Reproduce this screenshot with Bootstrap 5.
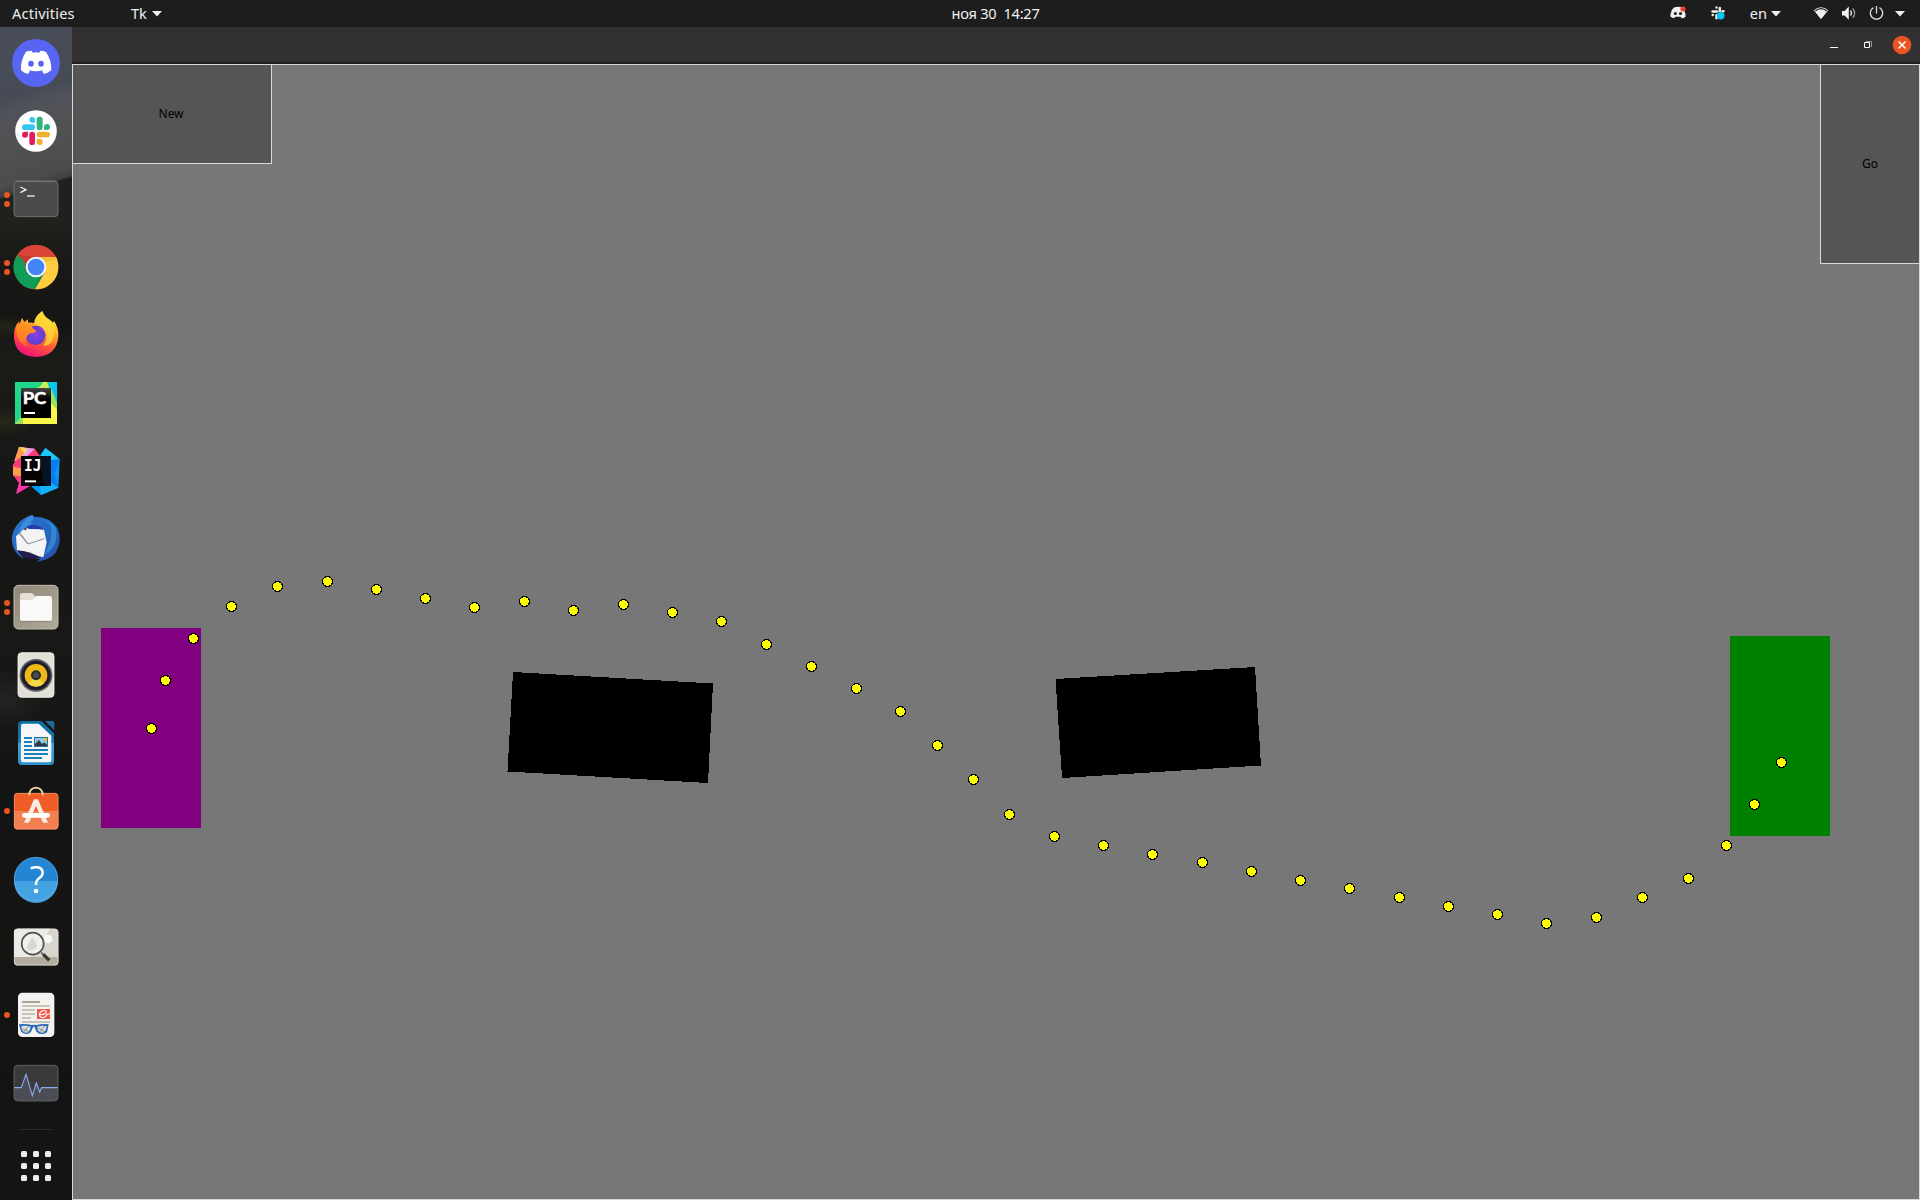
<!DOCTYPE html>
<html lang="en">
<head>
<meta charset="utf-8">
<title>Tk</title>
<link href="https://cdn.jsdelivr.net/npm/bootstrap@5.3.0/dist/css/bootstrap.min.css" rel="stylesheet">
<style>
html,body{height:100%;overflow:hidden}
body{font-family:"Noto Sans","Open Sans",sans-serif;background:#1d1d1d}
.desk{width:1920px;height:1200px}
.topbar{height:27px;background:#1d1d1d;color:#f0f0f0;font-size:14.6px;line-height:27px;display:grid;grid-template-columns:1fr auto 1fr}
.topbar svg{display:block}
.act{padding-left:12px;width:131px;letter-spacing:.2px}
.clock{white-space:pre;letter-spacing:-.25px;padding-left:71px}
.dock{width:72px;padding-top:2px;background:
 radial-gradient(ellipse 30px 14px at 6px 395px,#33361d88,transparent),
 radial-gradient(ellipse 26px 12px at 8px 300px,#33361d77,transparent),
 radial-gradient(ellipse 40px 30px at 6px 672px,#35353566,transparent),
 linear-gradient(163deg,#484d58 0,#464b55 70px,#50525a 84px,#515254 110px,#4b4c4d 154px,#3d3f3e 163px,transparent 165px),
 linear-gradient(22deg,transparent 985px,#1a1a19 990px),
 linear-gradient(#1f211c 0,#1f211c 195px,#1a1917 230px,#151514 300px,#1b1c18 330px,#161615 480px,#181816 620px,#131415 780px,#161514 900px,#131313 1050px,#151518 1173px);
 background-color:#161615}
.slot{height:68px;padding:10px 12px;position:relative}
.slot>svg{display:block;width:48px;height:48px;overflow:visible}
.run{position:absolute;left:4px;top:0;height:68px;width:6px;display:flex;flex-direction:column;justify-content:center;gap:3px}
.run i{width:6px;height:6px;border-radius:50%;background:#e95420}
.dock hr{width:32px;margin:12px 20px 0;border-color:#777;border-width:1px;height:0}
.apps{width:30px;margin:21px 0 0 21px;display:grid;grid-template-columns:repeat(3,6px);gap:6px}
.apps i{width:6px;height:6px;border-radius:1.5px;background:#eee}
.titlebar{height:37px;background:#333031;border-bottom:2px solid #201e1f;padding:1px 8px 0 0}
.titlebar svg{display:block}
.stage{position:relative;background:#777;border:1px solid #d9d9d9}
.scene{position:absolute;left:-73px;top:-65px;width:1920px;height:1200px}
.tkbtn{background:#555;color:#000;border:0 solid #d9d9d9;font-size:12px;letter-spacing:-.1px;z-index:1;border-radius:0}
.tknew{width:199px;height:99px;border-width:0 1px 1px 0;padding:0 2px 0 0}
.tkgo{width:99px;height:199px;border-width:0 0 1px 1px}
</style>
</head>
<body>
<div class="desk d-flex flex-column">
 <header class="topbar flex-shrink-0">
  <div class="d-flex">
   <div class="act">Activities</div><div>Tk</div>
   <svg width="12" height="27" style="margin-left:3px"><path d="M2 11h10l-5 5.500z" fill="#f0f0f0"/></svg>
  </div>
  <div class="clock">ноя 30  14:27</div>
  <div class="d-flex justify-content-end">
   <svg width="80" height="27" viewBox="1670 0 80 27">
    <path d="M1674 7.600q4.300-1.600 8 0 3.500 3 3.600 9-1.500 1.800-4.100 1.500l-.8-1.300h-5.400l-.9 1.300q-2.500.1-4-1.500 0-6 3.600-9z" fill="#f0f0f0"/><circle cx="1675.400" cy="13.500" r="1.600" fill="#1d1d1d"/><circle cx="1680.500" cy="13.500" r="1.600" fill="#1d1d1d"/><circle cx="1683" cy="9" r="2.600" fill="#ed3d3f"/>
    <g stroke="#eee" stroke-width="2.500" stroke-linecap="round"><path d="M1716.500 7.500v0M1719.800 8v3M1712.500 11.500h4.500M1722.500 11.300h1M1712.700 15h.1M1716.500 15.200v3M1720 15h3M1720 18v.1"/></g><circle cx="1720.700" cy="15.800" r="3.800" fill="#00c8ef"/>
   </svg>
   <div>en</div>
   <svg width="153" height="27" viewBox="1767 0 153 27">
    <g fill="#f0f0f0"><path d="M1771 11h10l-5 5.500zM1895 11h10l-5 5.500z"/><path d="M1813.800 10.200q7.200-6 14.400 0L1821 19.300z"/><path d="M1842 11h2.600l4.200-4.500v13.200l-4.200-4.200h-2.600z"/></g>
    <path d="M1815.200 11q5.800-4.700 11.600 0" stroke="#1d1d1d" stroke-width="1.200" fill="none"/>
    <g fill="none" stroke="#ddd" stroke-width="1.300"><path d="M1850.500 10.500q2 2.700 0 5.200"/><path d="M1852.700 8.300q4 5 0 9.500" stroke="#999"/><path d="M1873.500 7.600a6.200 6.200 0 1 0 6 0M1876.500 6v7.500"/></g>
   </svg>
  </div>
 </header>
 <div class="d-flex flex-grow-1">
  <nav class="dock flex-shrink-0">
   <div class="slot"><svg viewBox="36 117 144 144"><circle cx="108" cy="189" r="72" fill="#5865f2"/><path d="M78 155q9-3 17-3l3 6q10-2 20 0l3-6q9 0 17 4 17 25 16 55-10 8-22 11l-6-9 5-4q-23 9-46 0l5 4-6 9q-12-3-21-11-2-30 15-56z" fill="#fff"/><ellipse cx="93" cy="191" rx="8.500" ry="9" fill="#5865f2"/><ellipse cx="123" cy="191" rx="8.500" ry="9" fill="#5865f2"/></svg></div>
   <div class="slot"><svg viewBox="36 321 144 144"><circle cx="108" cy="393" r="62.500" fill="#fff"/><g fill="#36c5f0"><path d="M105 368h-9a8.500 8.500 0 1 1 9-9z"/><rect x="66" y="373" width="39" height="17" rx="8.500"/></g><g fill="#2eb67d"><rect x="110" y="350" width="18" height="40" rx="8.500"/><path d="M132 390v-9a9 9 0 1 1 9 9z"/></g><g fill="#ecb22e"><rect x="110" y="395" width="40" height="17" rx="8.500"/><path d="M110 417h9a9 9 0 1 1-9 9z"/></g><g fill="#e01e5a"><rect x="88" y="395" width="17" height="40" rx="8.500"/><path d="M84 395v9a9 9 0 1 1-9-9z"/></g></svg></div>
   <div class="slot"><div class="run"><i></i><i></i></div><svg viewBox="36 525 144 144"><rect x="42" y="543" width="132" height="107" rx="10" fill="#4b4b4b" stroke="#707070" stroke-width="3"/><path d="M48 544h120" stroke="#888" stroke-width="2"/><path d="M61 561l17 8-17 9" fill="none" stroke="#eee" stroke-width="4"/><path d="M81 588h23" stroke="#eee" stroke-width="4"/></svg></div>
   <div class="slot"><div class="run"><i></i><i></i></div><svg viewBox="36 39 144 144"><circle cx="108" cy="111" r="67" fill="#db4437"/><path d="M52 74A67 67 0 0 0 105 178L135 127 108 111 81 126z" fill="#0f9d58"/><path d="M108 81h60A67 67 0 0 1 105 178L134 127z" fill="#ffcd40"/><path d="M52 74l28 50 1-30 27-13" fill="#c53a30"/><path d="M52 74l28 52-6-30z" fill="#0f9d58"/><path d="M108 81h60l3 9-34 5z" fill="#f3bd34"/><path d="M134 127l-29 51 8-30z" fill="#0c874b" opacity=".5"/><circle cx="108" cy="111" r="31" fill="#f5f5f5"/><circle cx="108" cy="111" r="25" fill="#4285f4"/></svg></div>
   <div class="slot"><svg viewBox="36 243 144 144"><defs><linearGradient id="ff" x1=".8" y1="0" x2=".35" y2="1"><stop offset="0" stop-color="#fff44f"/><stop offset=".35" stop-color="#ffb62a"/><stop offset=".65" stop-color="#ff5a35"/><stop offset="1" stop-color="#f0107c"/></linearGradient><radialGradient id="fp"><stop offset="0" stop-color="#8a3ff0"/><stop offset="1" stop-color="#5c3fc4"/></radialGradient><linearGradient id="fo" x1="0" x2="0" y1="0" y2="1"><stop offset="0" stop-color="#ff9a1f"/><stop offset="1" stop-color="#ff6a2c"/></linearGradient></defs><path d="M43 300q5-17 14-26l2 9 7-20 7 13 11-8v10q9-1 18 1 2-20 25-36 5 16 20 25 12 8 11 11l4-6q14 20 13 45-4 60-67 63-62-3-66-58 0-12 1-23z" fill="url(#ff)"/><circle cx="107" cy="316" r="29" fill="url(#fp)"/><path d="M49 290q15-18 35-12l-1 8q12-7 24-3-13 4-10 10l12 10q-3 6-16 7-12 3-14 14-8 18 11 27-44-10-41-61z" fill="url(#fo)"/><path d="M106 283q-4-20 20-39 5 16 20 25 26 27 12 63-14 18-29 15 26-33-6-54-4-6-17-10z" fill="#ffda36" opacity=".75"/><path d="M116 287q19 7 20 28-9-16-19-19z" fill="#a335dd"/></svg></div>
   <div class="slot"><svg viewBox="36 447 144 144"><defs><linearGradient id="pb" x1="0" x2="0" y1="0" y2="1"><stop offset="0" stop-color="#444"/><stop offset=".4" stop-color="#000"/></linearGradient></defs><path d="M45 456h126v126H45z" fill="#21d789"/><path d="M148 456h23v63l-23-10z" fill="#07c3f2"/><path d="M45 582l20-22 65-104h11l7 52 23 12v62z" fill="#fcf84a"/><path d="M45 582l24-27v27zM153 474l18 45v20l-18-20z" fill="#9be35b"/><path d="M110 475l31-19 6 18z" fill="#c6ed52"/><rect x="63" y="474" width="90" height="90" fill="url(#pb)"/><text x="68" y="523" textLength="71" lengthAdjust="spacingAndGlyphs" font-family="Lato" font-weight="700" font-size="51" fill="#fff" stroke="#fff" stroke-width="1.500">PC</text><path d="M72 546h33v6H72z" fill="#fff"/></svg></div>
   <div class="slot"><svg viewBox="36 651 144 144"><path d="M57 651l47 5 22 30-30 65-48 41 9-33-18-23 9-12-11-17 13-19z" fill="#f83c79"/><path d="M57 651l47 5-22 22H64l-21 18z" fill="#ee9bf4"/><path d="M57 651l24 4-16 27-22 10zM39 710l24 5v24l-24-3z" fill="#ff9b47"/><path d="M57 651l25 4-5 18z" fill="#ffd45c"/><path d="M64 733l-15 59 51-30z" fill="#ff32b0"/><path d="M136 654l43 33-4 86-52 22-28-25 30-52-6-40z" fill="#0797f7"/><path d="M136 654l20 15 22 19-26 3-30-14z" fill="#19c6ff"/><path d="M153 690l25-2-15 45 12 40-22-5z" fill="#087cf1"/><path d="M120 765l33-7 22 15-52 22z" fill="#13b3fc"/><path d="M63 678h90v90H63z" fill="#080404"/><path d="M115 678h38v90h-19z" fill="#061322"/><text x="72" y="724" font-family="DejaVu Sans Mono" font-weight="700" font-size="48" textLength="52" lengthAdjust="spacingAndGlyphs" fill="#fff">IJ</text><path d="M75 751h33v6H75z" fill="#fff"/></svg></div>
   <div class="slot"><svg viewBox="36 75 144 144"><defs><linearGradient id="tb" x1="0" y1="0" x2="1" y2="1"><stop offset="0" stop-color="#2d73ce"/><stop offset=".55" stop-color="#2469c0"/><stop offset="1" stop-color="#2848aa"/></linearGradient></defs><path d="M62 92q17-14 34-17l3 5q49-2 73 34 17 36-5 74-18 22-58 27l12-8q-31-2-57-19l6 18q-38-23-34-68 3-22 26-46z" fill="url(#tb)"/><path d="M48 139l22-21 15-7 47 9 8 36-10 46-79-20z" fill="#f4f4f5"/><path d="M51 181q40 3 70 22-32 9-56-4z" fill="#231c4d"/><path d="M60 128l24 34 49-16M84 162l-28-32" fill="none" stroke="#777b82" stroke-width="2.500"/><path d="M57 132q3-39 40-57 10 9-5 20 10 13-24 25z" fill="#3a8edb"/><path d="M101 82q42 7 51 29 10 30-20 85 40-23 37-66 4-35-68-48z" fill="#399add" opacity=".65"/><path d="M78 111q25-16 52 7l-44-1z" fill="#223eae"/><circle cx="76" cy="117" r="4" fill="#534b4d"/></svg></div>
   <div class="slot"><div class="run"><i></i><i></i></div><svg viewBox="36 279 144 144"><defs><linearGradient id="fi" x2="1" y2="1"><stop offset="0" stop-color="#8f8777"/><stop offset="1" stop-color="#b0aa98"/></linearGradient></defs><rect x="42" y="286" width="132" height="131" rx="13" fill="url(#fi)" stroke="#c3beb0" stroke-width="3"/><path d="M60 340v-24q0-7 7-7h26q4 0 8 5l6 6v20z" fill="#e5e0d7"/><path d="M60 330h32q6 0 9-4l5-6q2-2 6-2h37q7 0 7 7v61q0 7-7 7H67q-7 0-7-7z" fill="#faf9f8"/><path d="M66 394h84" stroke="#7c7566" stroke-width="2"/></svg></div>
   <div class="slot"><svg viewBox="36 483 144 144"><rect x="54" y="488" width="108" height="134" rx="11" fill="#e3e0d7" stroke="#f2f0ea" stroke-width="2.500"/><circle cx="108" cy="556" r="49" fill="#555b63"/><circle cx="108" cy="556" r="44" fill="#1f1c2a"/><circle cx="108" cy="556" r="34" fill="#eeb817"/><path d="M108 556l23 25a34 34 0 0 1-46 0z" fill="#f7d74b"/><circle cx="108" cy="556" r="15" fill="#292b2d"/><circle cx="108" cy="556" r="9" fill="#4b4d4d"/></svg></div>
   <div class="slot"><svg viewBox="36 687 144 144"><defs><linearGradient id="wr" x1="0" x2="0" y1="0" y2="1"><stop offset="0" stop-color="#0f6da3"/><stop offset=".5" stop-color="#187cb3"/><stop offset=".51" stop-color="#45a5d8"/><stop offset="1" stop-color="#2a92cc"/></linearGradient></defs><path d="M66 693h58l38 37v84q0 11-11 11H66q-12 0-12-12V705q0-12 12-12z" fill="url(#wr)"/><path d="M70 701h46l38 36v74q0 6-7 6H70q-7 0-7-7V708q0-7 7-7z" fill="#f4f6f8"/><path d="M135 693h22q6 0 6 6v22z" fill="#1b6d9b"/><g stroke="#1a81b7" stroke-width="6"><path d="M72 744h24M72 756h24M72 768h24M72 780h72M72 792h72M72 804h54"/></g><rect x="102" y="741" width="42" height="30" fill="#1777aa"/><path d="M105 744h36v24h-36z" fill="#91c6e8"/><path d="M105 768v-6l12-12 9 12 7-5 8 8v3z" fill="#343a3e"/><path d="M131 744h10v10q-9 0-10-10z" fill="#fabb18"/></svg></div>
   <div class="slot"><div class="run"><i></i></div><svg viewBox="36 51 144 144"><rect x="42" y="69" width="133" height="109" rx="11" fill="#f05d27"/><path d="M42 123h133v44q0 11-11 11H53q-11 0-11-11z" fill="#f27f50"/><rect x="43" y="70" width="131" height="107" rx="10" fill="none" stroke="#f69b77" stroke-width="2"/><path d="M87 76q2-22 21-23 19 1 21 23" fill="none" stroke="#efd8a1" stroke-width="5"/><path d="M102 88h12l30 70h-15l-21-51-21 51H72z" fill="#f9ece5"/><rect x="66" y="129" width="84" height="14" rx="7" fill="#fff"/></svg></div>
   <div class="slot"><svg viewBox="36 255 144 144"><circle cx="108" cy="327" r="66" fill="#2485d3"/><path d="M42 333h132a66 66 0 0 1-132 0z" fill="#43a2e1"/><circle cx="108" cy="327" r="65" fill="none" stroke="#65b0e4" stroke-width="2"/><path d="M92 295q12-5 21-3 15 3 15 16 0 9-10 16-11 8-10 21" fill="none" stroke="#fff" stroke-width="7.500"/><circle cx="108" cy="363" r="7" fill="#fff"/></svg></div>
   <div class="slot"><svg viewBox="36 459 144 144"><rect x="42" y="476" width="133" height="110" rx="11" fill="#d8d6cc"/><path d="M53 476h98l-60 85H42v-74q0-11 11-11z" fill="#eceae4"/><path d="M42 561h133v14q0 11-11 11H53q-11 0-11-11z" fill="#b1ac9b"/><circle cx="144" cy="507" r="13" fill="#f8f8f6"/><circle cx="98" cy="521" r="33" fill="#f0efeb" stroke="#525252" stroke-width="5"/><path d="M79 535l17-34 9 12 7 15q-16 23-33 7z" fill="#d7d8d4"/><path d="M124 548l7 7" stroke="#555" stroke-width="5"/><path d="M130 553l18 18" stroke="#373737" stroke-width="10"/><rect x="43" y="477" width="131" height="108" rx="10" fill="none" stroke="#e7e5df" stroke-width="2"/></svg></div>
   <div class="slot"><div class="run"><i></i></div><svg viewBox="36 33 144 144"><rect x="54" y="38" width="109" height="133" rx="13" fill="#f3f2f0"/><g stroke="#c7c3b6" stroke-width="6"><path d="M66 66h54" stroke="#aaa592"/><path d="M66 78h84M66 90h39M66 102h39M66 114h27M66 126h84"/></g><path d="M111 87h39v30h-39z" fill="#f15a4a"/><path d="M119 104q20 0 20-8-2-6-11-4-11 4-9 14 2 9 13 6 6-2 9-8 4-3 9-3" fill="none" stroke="#fff" stroke-width="3.200"/><path d="M57 133q23-2 38 2 7-2 14 0 20-4 37-2l-4 21q-3 8-17 8-16 0-20-18l-3-5-4 5q-5 18-20 18-13-1-16-11z" fill="#2769b7"/><path d="M64 138q16-2 28 2-2 18-15 18-12-2-13-20zM111 140q16-4 29-2-2 20-14 20-13-2-15-18z" fill="#dbe0e3"/><path d="M70 158l15-19M119 157l15-19M69 147l22 10M114 143l22 14" stroke="#777d83" stroke-width="2.500"/></svg></div>
   <div class="slot"><svg viewBox="36 237 144 144"><rect x="42" y="256" width="132" height="107" rx="12" fill="#3a3a3b"/><path d="M42 323h22l14-40 19 64 12-37 10 26 6-13h49v28q0 12-12 12H54q-12 0-12-12z" fill="#4a4d54"/><path d="M42 323h22l14-40 19 64 12-38 10 27 6-13h49" fill="none" stroke="#8daafb" stroke-width="3.300"/><rect x="42" y="256" width="132" height="107" rx="12" fill="none" stroke="#606060" stroke-width="3"/></svg></div>
   <hr>
   <div class="apps"><i></i><i></i><i></i><i></i><i></i><i></i><i></i><i></i><i></i></div>
  </nav>
  <main class="d-flex flex-column flex-grow-1">
   <div class="titlebar d-flex justify-content-end align-items-center flex-shrink-0">
    <svg width="90" height="34" viewBox="1822 28 90 34"><path d="M1830 47h8v1h-8z" fill="#fff"/><path d="M1864.500 42.500h5v5h-5z" fill="none" stroke="#fff"/><path d="M1866 41.500h5.500v5.500" fill="none" stroke="#999"/><circle cx="1902" cy="45" r="9.300" fill="#e95420"/><path d="M1898.500 41.500l7 7m0-7l-7 7" stroke="#fff" stroke-width="1.500"/></svg>
   </div>
   <section class="stage flex-grow-1 d-flex justify-content-between align-items-start">
    <svg class="scene" viewBox="0 0 1920 1200">
     <g shape-rendering="crispEdges"><path d="M101 628h100v200H101z" fill="purple"/><path d="M1730 636h100v200h-100z" fill="green"/><path d="M513 672L713 683.500 708 783 507.500 771.500z"/><path d="M1055.500 679L1255 667 1261 765.500 1062 778z"/></g>
     <g id="track" fill="#ff0" stroke="#000" shape-rendering="crispEdges"></g>
    </svg>
    <button class="tkbtn tknew position-relative">New</button>
    <button class="tkbtn tkgo position-relative p-0">Go</button>
   </section>
  </main>
 </div>
</div>
<script src="https://cdn.jsdelivr.net/npm/bootstrap@5.3.0/dist/js/bootstrap.bundle.min.js"></script>
<script>
// Waypoints of the planned route, from the start area to the finish area
const route=[[151,728],[165,680],[193,638],[231,606],[277,586],[327,581],[376,589],[425,598],[474,607],[524,601],[573,610],[623,604],[672,612],[721,621],[766,644],[811,666],[856,688],[900,711],[937,745],[973,779],[1009,814],[1054,836],[1103,845],[1152,854],[1202,862],[1251,871],[1300,880],[1349,888],[1399,897],[1448,906],[1497,914],[1546,923],[1596,917],[1642,897],[1688,878],[1726,845],[1754,804],[1781,762]];
const track=document.getElementById('track');
for(const [x,y] of route){
 const c=document.createElementNS('http://www.w3.org/2000/svg','circle');
 c.setAttribute('cx',x+.5);c.setAttribute('cy',y+.5);c.setAttribute('r',5);
 track.appendChild(c);
}
</script>
</body>
</html>
